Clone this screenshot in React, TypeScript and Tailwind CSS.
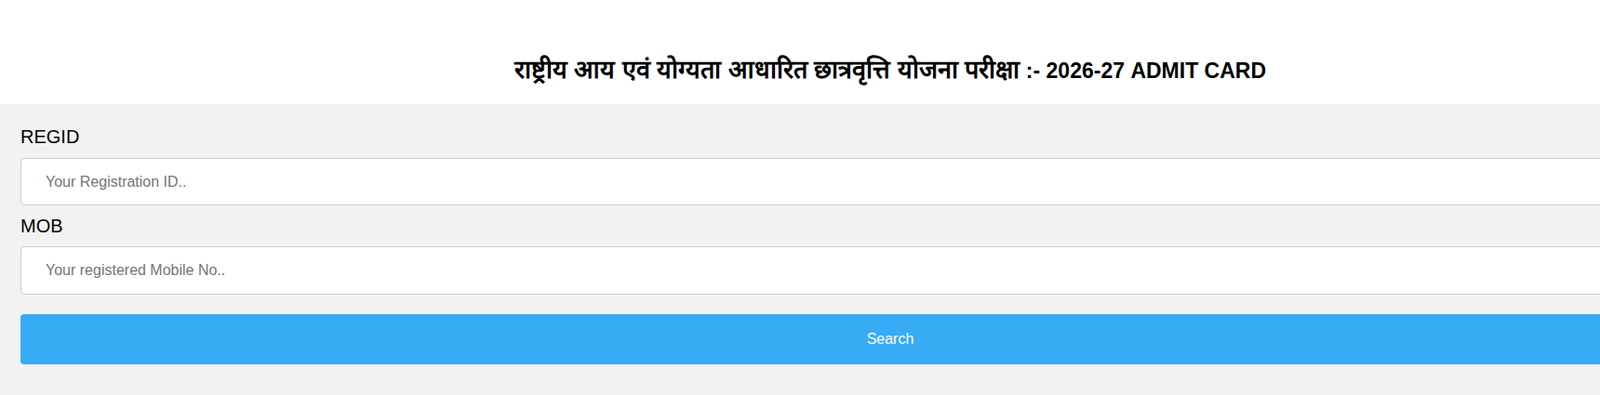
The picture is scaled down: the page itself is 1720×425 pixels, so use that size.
export default function App() {
  return (
    <div className="w-full overflow-hidden bg-white font-['Liberation_Sans',Arial,sans-serif]">
      <div className="w-[1914px]">
        <div className="h-[112px] pt-[62px] text-center">
          <h2 className="text-[23px] leading-[26px] font-bold text-black">
            <span className="text-[27px]">राष्ट्रीय आय एवं योग्यता आधारित छात्रवृत्ति योजना परीक्षा</span> :- 2026-27 ADMIT CARD
          </h2>
        </div>

        <form className="bg-[#f2f2f2] px-[22px] pt-6 pb-[33px]">
          <label className="block text-[20px] leading-[23px] text-black">REGID</label>
          <input
            type="text"
            placeholder="Your Registration ID.."
            className="mt-[11px] block h-[51px] w-full rounded-[4px] border border-[#ccc] bg-white px-[26px] text-[16px] text-black outline-none placeholder:text-[#757575]"
          />

          <label className="mt-[11px] block text-[20px] leading-[23px] text-black">MOB</label>
          <input
            type="text"
            placeholder="Your registered Mobile No.."
            className="mt-[10px] block h-[52px] w-full rounded-[4px] border border-[#ccc] bg-white px-[26px] text-[16px] text-black outline-none placeholder:text-[#757575]"
          />

          <button
            type="button"
            className="mt-[21px] block h-[54px] w-full rounded-[4px] bg-[#38abf5] text-[16px] text-white"
          >
            Search
          </button>
        </form>
      </div>
    </div>
  );
}
